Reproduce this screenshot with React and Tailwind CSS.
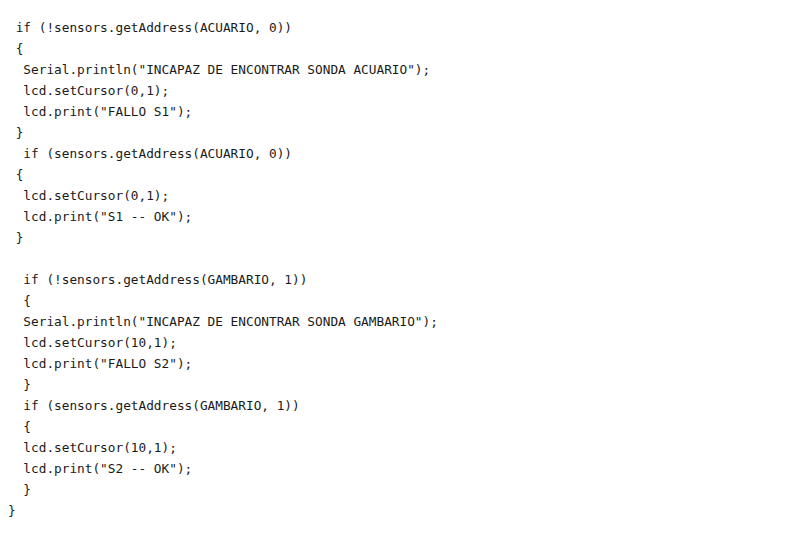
const lines = [
  ' if (!sensors.getAddress(ACUARIO, 0))',
  ' {',
  '  Serial.println("INCAPAZ DE ENCONTRAR SONDA ACUARIO");',
  '  lcd.setCursor(0,1);',
  '  lcd.print("FALLO S1");',
  ' }',
  '  if (sensors.getAddress(ACUARIO, 0))',
  ' {',
  '  lcd.setCursor(0,1);',
  '  lcd.print("S1 -- OK");',
  ' }',
  '',
  '  if (!sensors.getAddress(GAMBARIO, 1))',
  '  {',
  '  Serial.println("INCAPAZ DE ENCONTRAR SONDA GAMBARIO");',
  '  lcd.setCursor(10,1);',
  '  lcd.print("FALLO S2");',
  '  }',
  '  if (sensors.getAddress(GAMBARIO, 1))',
  '  {',
  '  lcd.setCursor(10,1);',
  '  lcd.print("S2 -- OK");',
  '  }',
  '}',
];

export default function App() {
  return (
    <div className="w-[800px] h-[556px] bg-white overflow-hidden">
      <pre className="pl-[8px] pt-[17px] m-0 text-[12.75px] leading-[21px] text-[#1a1a1a] font-['DejaVu_Sans_Mono','Liberation_Mono',monospace]">
        {lines.map((l, i) => (
          <div key={i} className="h-[21px] whitespace-pre">{l}</div>
        ))}
      </pre>
    </div>
  );
}
